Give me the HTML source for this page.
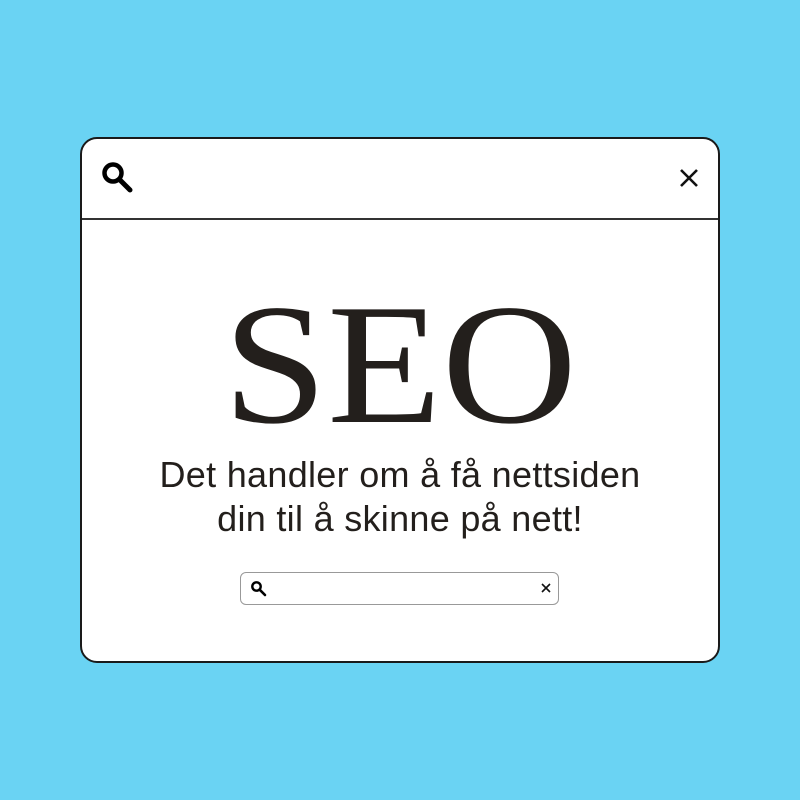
<!DOCTYPE html>
<html><head><style>
body{margin:0;width:800px;height:800px;background:#6ad3f3;position:relative;overflow:hidden}
.box{position:absolute;left:80px;top:137px;width:636px;height:522px;background:#fff;border:2px solid #1a1a1a;border-radius:17px}
.hd{position:absolute;left:0;right:0;top:79px;border-top:2px solid #333}
.seo{position:absolute;left:0;width:800px;top:265px;text-align:center;font-family:"Liberation Serif",serif;font-size:172px;line-height:200px;color:#231f1c;transform:scaleX(1.09)}
.sub{position:absolute;left:0;width:800px;top:453px;text-align:center;font-family:"Liberation Sans",sans-serif;font-size:36px;line-height:44px;color:#231f1c;letter-spacing:0.3px}
.sb{position:absolute;left:240px;top:572px;width:317px;height:31px;border:1px solid #999;border-radius:6px;background:#fff}
</style></head><body>
<div class="box"><div class="hd"></div></div>
<svg style="position:absolute;left:100px;top:160px" width="36" height="36" viewBox="0 0 36 36"><circle cx="13" cy="13" r="8.5" fill="none" stroke="#000" stroke-width="4.5"/><line x1="19.5" y1="19.5" x2="30" y2="30" stroke="#000" stroke-width="5" stroke-linecap="round"/></svg>
<svg style="position:absolute;left:678px;top:167px" width="22" height="22" viewBox="0 0 22 22"><path d="M3 3L19 19M19 3L3 19" stroke="#111" stroke-width="2.6"/></svg>
<div class="seo">SEO</div>
<div class="sub">Det handler om å få nettsiden<br>din til å skinne på nett!</div>
<div class="sb"></div>
<svg style="position:absolute;left:250px;top:580px" width="18" height="18" viewBox="0 0 18 18"><circle cx="6.5" cy="6.5" r="4.2" fill="none" stroke="#000" stroke-width="2.4"/><line x1="9.8" y1="9.8" x2="15" y2="15" stroke="#000" stroke-width="2.6" stroke-linecap="round"/></svg>
<svg style="position:absolute;left:540px;top:582px" width="12" height="12" viewBox="0 0 12 12"><path d="M2 2L10 10M10 2L2 10" stroke="#111" stroke-width="1.6"/></svg>
</body></html>
